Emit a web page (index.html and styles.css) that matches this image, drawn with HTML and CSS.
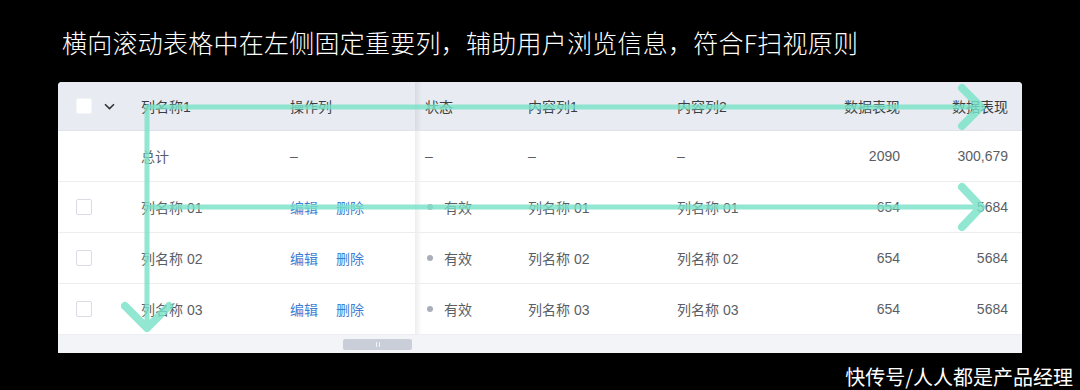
FILE: index.html
```html
<!DOCTYPE html>
<html lang="zh-CN">
<head>
<meta charset="utf-8">
<link rel="stylesheet" href="styles.css">
</head>
<body>
<div class="page">
  <h1 class="title">横向滚动表格中在左侧固定重要列，辅助用户浏览信息，符合F扫视原则</h1>
  <div class="card">
    <div class="table">
      <div class="row head">
        <div class="cell c0"><span class="check white"></span><svg class="chev" width="11" height="7" viewBox="0 0 11 7"><path d="M1 1.2 L5.5 5.6 L10 1.2" fill="none" stroke="#333" stroke-width="1.6"/></svg></div>
        <div class="cell">列名称1</div>
        <div class="cell">操作列</div>
        <div class="cell edge">状态</div>
        <div class="cell">内容列1</div>
        <div class="cell">内容列2</div>
        <div class="cell right">数据表现</div>
        <div class="cell right last">数据表现</div>
      </div>
      <div class="row">
        <div class="cell c0"></div>
        <div class="cell">总计</div>
        <div class="cell">–</div>
        <div class="cell edge">–</div>
        <div class="cell">–</div>
        <div class="cell">–</div>
        <div class="cell right">2090</div>
        <div class="cell right last">300,679</div>
      </div>
      <div class="row">
        <div class="cell c0"><span class="check"></span></div>
        <div class="cell">列名称 01</div>
        <div class="cell ops"><a class="link">编辑</a><a class="link">删除</a></div>
        <div class="cell edge"><span class="dot"></span>有效</div>
        <div class="cell">列名称 01</div>
        <div class="cell">列名称 01</div>
        <div class="cell right">654</div>
        <div class="cell right last">5684</div>
      </div>
      <div class="row">
        <div class="cell c0"><span class="check"></span></div>
        <div class="cell">列名称 02</div>
        <div class="cell ops"><a class="link">编辑</a><a class="link">删除</a></div>
        <div class="cell edge"><span class="dot"></span>有效</div>
        <div class="cell">列名称 02</div>
        <div class="cell">列名称 02</div>
        <div class="cell right">654</div>
        <div class="cell right last">5684</div>
      </div>
      <div class="row final">
        <div class="cell c0"><span class="check"></span></div>
        <div class="cell">列名称 03</div>
        <div class="cell ops"><a class="link">编辑</a><a class="link">删除</a></div>
        <div class="cell edge"><span class="dot"></span>有效</div>
        <div class="cell">列名称 03</div>
        <div class="cell">列名称 03</div>
        <div class="cell right">654</div>
        <div class="cell right last">5684</div>
      </div>
    </div>
    <div class="scrollbar">
      <div class="thumb"><span class="grip"></span><span class="grip"></span></div>
    </div>
    <svg class="fpath" width="964" height="270" viewBox="0 0 964 270">
      <g stroke="#79e2c7" fill="none" stroke-linecap="round" stroke-linejoin="round" opacity="0.82">
        <path d="M89 25 H921" stroke-width="5"/>
        <path d="M904 6 L923 25 L904 44" stroke-width="8"/>
        <path d="M89 25 V246" stroke-width="5"/>
        <path d="M67 224 L89 246 L111 224" stroke-width="8"/>
        <path d="M89 125 H921" stroke-width="5"/>
        <path d="M904 105 L923 125 L904 145" stroke-width="8"/>
      </g>
    </svg>
  </div>
  <div class="footer">快传号/人人都是产品经理</div>
</div>
</body>
</html>
```
FILE: styles.css
```css
html, body {
  margin: 0;
  padding: 0;
  background: #000;
}
body {
  font-family: "Liberation Sans", "Noto Sans CJK SC", sans-serif;
  width: 1080px;
  height: 390px;
  overflow: hidden;
}
.page {
  display: flex;
  flex-direction: column;
  padding: 0 0 0 58px;
}
.title {
  margin: 26px 0 0 4px;
  font-family: "Noto Sans CJK SC", sans-serif;
  font-weight: 300;
  font-size: 25px;
  line-height: 32px;
  letter-spacing: 0.25px;
  color: #fff;
}
.card {
  position: relative;
  margin-top: 24px;
  width: 964px;
  background: #fff;
  border-radius: 4px 4px 0 0;
  overflow: hidden;
}
.table {
  display: flex;
  flex-direction: column;
}
.row {
  display: grid;
  grid-template-columns: 67px 149px 141px 97px 149px 99px 156px 106px;
  height: 50px;
  border-bottom: 1px solid #ededf0;
  font-family: "Liberation Sans", "Noto Sans CJK SC", sans-serif;
  font-size: 14px;
  color: #5a5e66;
}
.row.head {
  height: 48px;
  background: #e8ecf2;
  border-bottom: 1px solid #dfe3ea;
  color: #3a3d42;
}
.row.final {
  border-bottom: none;
}
.cell {
  display: flex;
  align-items: center;
  padding-left: 16px;
}
.cell.c0 {
  padding-left: 18px;
}
.cell.edge {
  padding-left: 10px;
  background-image: linear-gradient(to right, rgba(0, 0, 0, 0.07), rgba(0, 0, 0, 0) 7px);
}
.cell.right {
  justify-content: flex-end;
  padding-left: 0;
  padding-right: 16px;
}
.cell.right.last {
  padding-right: 14px;
}
.check {
  width: 14px;
  height: 14px;
  border: 1px solid #d9dce2;
  border-radius: 2px;
  background: #fff;
}
.check.white {
  border-color: #f4f5f7;
}
.chev {
  margin-left: 12px;
}
.ops {
  gap: 18px;
}
.link {
  color: #3f7ed3;
}
.dot {
  width: 6px;
  height: 6px;
  border-radius: 50%;
  background: #a9aeb8;
  margin-right: 11px;
  margin-left: 2px;
}
.scrollbar {
  height: 18px;
  background: #f3f4f8;
  border-top: 1px solid #eceef2;
  display: flex;
  align-items: center;
  padding-left: 285px;
}
.thumb {
  width: 69px;
  height: 11px;
  background: #c9ced8;
  border-radius: 2px;
  display: flex;
  justify-content: center;
  align-items: center;
  gap: 2px;
}
.grip {
  width: 1px;
  height: 5px;
  background: #f2f3f6;
}
.fpath {
  position: absolute;
  left: 0;
  top: 0;
  pointer-events: none;
}
.footer {
  margin-top: 10px;
  align-self: flex-end;
  padding-right: 7px;
  font-family: "Noto Sans CJK SC", sans-serif;
  font-size: 20px;
  line-height: 28px;
  color: #fff;
}
```
